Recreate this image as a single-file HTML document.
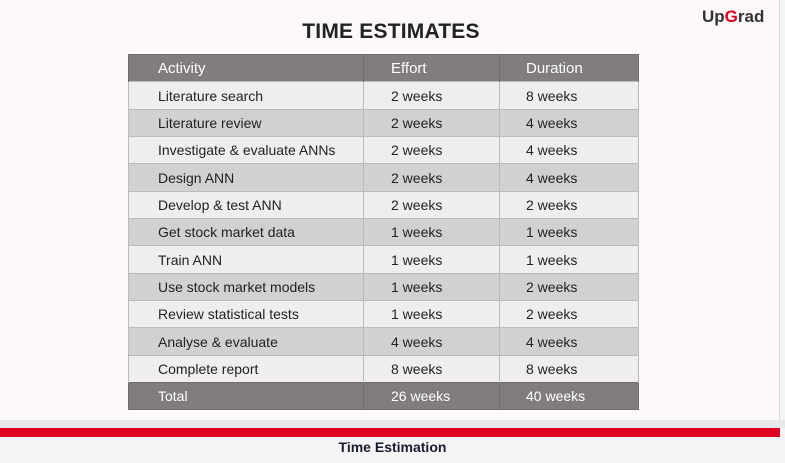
<!DOCTYPE html>
<html><head><style>
body{margin:0;width:785px;height:463px;overflow:hidden;background:#f3f4f6;font-family:"Liberation Sans",sans-serif;position:relative}
.slide{position:absolute;left:0;top:0;width:779px;height:420px;background:#fcf8fb;border-right:1px solid #d8d8d8}
h1{position:absolute;top:20px;left:0;width:782px;text-align:center;margin:0;font-size:21px;font-weight:bold;color:#222;letter-spacing:0.2px}
.logo{position:absolute;left:702px;top:7px;font-size:17px;font-weight:bold;color:#333}
.logo span{color:#e0001b}
table{position:absolute;left:128px;top:54px;width:511px;border-collapse:collapse;font-size:14px;color:#222}
tr{height:27.35px}
td{padding:0 0 0 29px;border:1px solid #bbb;border-width:1px 1px 0 0}
td:first-child{border-left:1px solid #bbb}
td:nth-child(2){padding-left:27px}
td:nth-child(3){padding-left:26px}
tr.h td{background:#807c7f;color:#fff;font-size:15px;border-color:#6e6a6d}
tr.t td{background:#807c7f;color:#fff;border-color:#6e6a6d;border-bottom:1px solid #6e6a6d}
tr:nth-child(even) td{background:#efedf0}
tr:nth-child(odd):not(.h):not(.t) td{background:#d3d0d3}
.grey{position:absolute;top:420px;left:0;width:785px;height:8px;background:#e8e8e8}
.red{position:absolute;top:428px;left:0;width:780px;height:9px;background:#df0021}
.cap{position:absolute;top:439px;width:785px;text-align:center;font-size:14px;font-weight:bold;color:#1a1a2e}
</style></head><body>
<div class="slide">
<h1>TIME ESTIMATES</h1>
<div class="logo">Up<span>G</span>rad</div>
<table>
<tr class="h"><td style="width:205px">Activity</td><td style="width:108px">Effort</td><td>Duration</td></tr>
<tr><td>Literature search</td><td>2 weeks</td><td>8 weeks</td></tr>
<tr><td>Literature review</td><td>2 weeks</td><td>4 weeks</td></tr>
<tr><td>Investigate &amp; evaluate ANNs</td><td>2 weeks</td><td>4 weeks</td></tr>
<tr><td>Design ANN</td><td>2 weeks</td><td>4 weeks</td></tr>
<tr><td>Develop &amp; test ANN</td><td>2 weeks</td><td>2 weeks</td></tr>
<tr><td>Get stock market data</td><td>1 weeks</td><td>1 weeks</td></tr>
<tr><td>Train ANN</td><td>1 weeks</td><td>1 weeks</td></tr>
<tr><td>Use stock market models</td><td>1 weeks</td><td>2 weeks</td></tr>
<tr><td>Review statistical tests</td><td>1 weeks</td><td>2 weeks</td></tr>
<tr><td>Analyse &amp; evaluate</td><td>4 weeks</td><td>4 weeks</td></tr>
<tr><td>Complete report</td><td>8 weeks</td><td>8 weeks</td></tr>
<tr class="t"><td>Total</td><td>26 weeks</td><td>40 weeks</td></tr>
</table>
</div>
<div class="grey"></div>
<div class="red"></div>
<div class="cap">Time Estimation</div>
</body></html>
